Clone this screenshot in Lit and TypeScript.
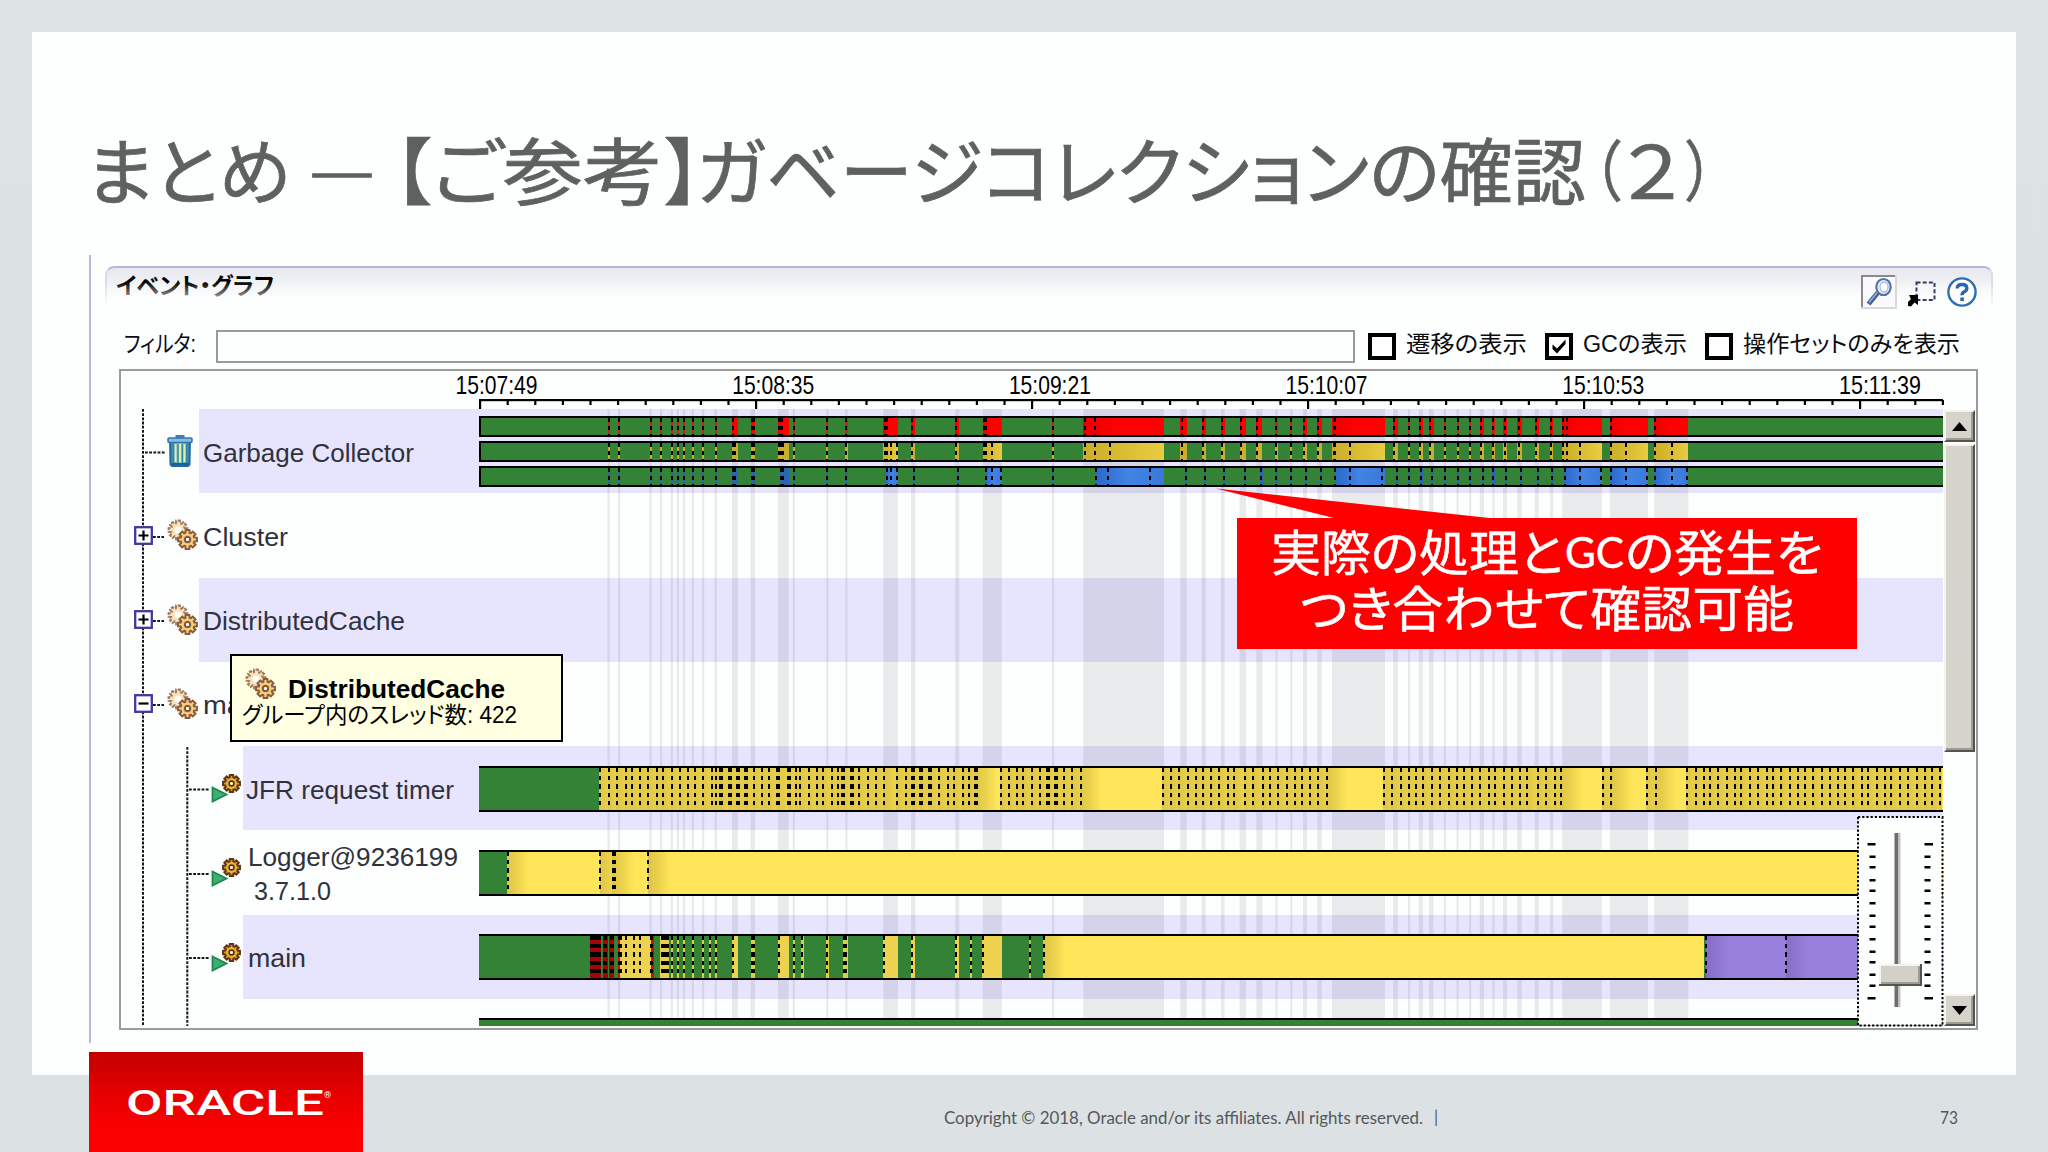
import { LitElement, html, svg, css, nothing } from "lit";
import { customElement, property } from "lit/decorators.js";

/** Text stretched or squeezed horizontally to a given advance width. */
@customElement("fit-text")
class FitText extends LitElement {
  @property({ type: Number }) w = 100;
  static styles = css`
    :host { display: inline-block; white-space: nowrap; flex: none; }
    span { display: inline-block; transform-origin: 0 50%; white-space: pre; }
  `;
  render() {
    return html`<span><slot></slot></span>`;
  }
  firstUpdated() {
    const span = this.renderRoot.querySelector("span") as HTMLElement;
    const natural = span.getBoundingClientRect().width;
    this.style.width = this.w + "px";
    if (natural > 0) span.style.transform = `scaleX(${this.w / natural})`;
  }
}

const GREEN = "#348235";
const YELLOW = "#fee559";
const PURPLE = "#9980dc";
const DASH = "4.2 4.2";

/** A garbage collection: extent, marks on the first two lanes, start and marks of the third. */
interface Pause { a: number; b: number; red: number[][]; yel: number[][]; blueFrom: number; blue: number[][]; }

const m = (x: number, w = 2) => [x, w];
const tiny = (x: number): Pause => ({ a: x - 1, b: x + 1.2, red: [m(x)], yel: [m(x)], blueFrom: x - 1, blue: [m(x)] });
const small = (a: number, b: number, d: number, e: number): Pause =>
  ({ a, b, red: [m(d)], yel: [m(d)], blueFrom: e - 1, blue: [m(e)] });

const PAUSES: Pause[] = [
  ...[608.5, 619, 650.5, 661, 671.7, 677.8, 684, 692.7, 703, 715.7].map(tiny),
  { a: 732, b: 738, red: [m(733)], yel: [m(734, 4)], blueFrom: 732, blue: [m(734, 4)] },
  { a: 750.5, b: 755, red: [m(752.8, 4)], yel: [m(752.8, 4)], blueFrom: 750.5, blue: [m(752.8, 4)] },
  { a: 778, b: 788.7, red: [m(780.3, 4.4)], yel: [m(781, 6)], blueFrom: 780, blue: [m(782.3, 4)] },
  tiny(793.8), tiny(827.2), tiny(846.3),
  { a: 883.3, b: 898, red: [m(886, 4)], yel: [m(886, 4), m(891), m(897)], blueFrom: 885.5, blue: [m(886.5), m(891), m(897)] },
  small(911, 915.4, 912, 914), small(955.3, 959.2, 956.3, 958.2),
  { a: 982.7, b: 1001.8, red: [m(984.8, 3.6)], yel: [m(984.8, 3.6), m(992)], blueFrom: 985.3, blue: [m(986), m(992), m(1000.6)] },
  tiny(1053),
  { a: 1083.3, b: 1164, red: [m(1084.7), m(1095.4)], yel: [m(1084.7), m(1095.4), m(1110)], blueFrom: 1095, blue: [m(1096), m(1108), m(1150)] },
  small(1180.3, 1186.7, 1181.7, 1185.7), small(1201.6, 1205.8, 1202.7, 1204.7), small(1221, 1224.6, 1221.8, 1223.6),
  small(1239.6, 1246, 1240.6, 1244.7), small(1256.3, 1262.4, 1257.4, 1261.4),
  tiny(1276.4), tiny(1291.2),
  small(1303, 1306.9, 1304, 1306), small(1317.3, 1321.8, 1318.4, 1320.7),
  { a: 1332, b: 1385, red: [m(1334.4, 3.6)], yel: [m(1334.4, 3.6), m(1350.2)], blueFrom: 1334.6, blue: [m(1335.2), m(1350.2), m(1382)] },
  small(1393.3, 1397.8, 1394.4, 1396.7), tiny(1409), small(1418.8, 1422.8, 1419.8, 1421.4),
  small(1429, 1433.5, 1430, 1432), tiny(1444.8), tiny(1457.5), tiny(1470),
  small(1479.8, 1484, 1480.8, 1482.8), tiny(1493.4), small(1503, 1507, 1504.6, 1505.6),
  small(1517.2, 1521.8, 1518.6, 1520.6), small(1534.6, 1538.8, 1536, 1537.5), small(1550, 1553.2, 1550.8, 1552.4),
  { a: 1562.2, b: 1601.8, red: [m(1562.8), m(1567)], yel: [m(1562.8), m(1566.6), m(1579.7)], blueFrom: 1564.3, blue: [m(1565), m(1579.7), m(1601)] },
  { a: 1610, b: 1648, red: [m(1611)], yel: [m(1611), m(1626)], blueFrom: 1610, blue: [m(1611), m(1626), m(1647)] },
  { a: 1654.3, b: 1688.3, red: [m(1655.4)], yel: [m(1655.4), m(1672.4)], blueFrom: 1654.3, blue: [m(1655.4), m(1672.4), m(1687)] },
];

const at = (base: number, scale: number, xs: number[]) => xs.map((x) => base + x / scale);

const TIMER_THIN = [
  ...at(460, 3, [420, 446, 471, 497, 515, 540, 565, 591, 610, 635, 660, 685, 704, 729, 755, 768, 882, 907, 926, 1008, 1021, 1046, 1071, 1090, 1116, 1135, 1198, 1223, 1248, 1273, 1312, 1337]),
  ...at(900, 3, [117, 143, 162, 188, 207, 302, 326, 352, 370, 396, 421, 491, 516, 542, 788, 813, 838, 863, 889, 908, 933, 958, 984, 1003, 1034, 1060, 1090, 1110, 1135, 1160, 1186, 1205, 1230, 1255, 1280]),
  ...at(1380, 2.529, [10, 30, 52, 73, 90, 110, 132, 153, 174, 195, 212, 233, 254, 276, 291, 313, 334, 355, 371, 399, 420, 442, 458, 564, 585, 676, 697, 777, 798, 819, 835, 856, 878, 899, 914, 936, 957, 979, 994, 1015, 1037, 1058, 1074, 1096, 1117, 1138, 1159, 1175, 1197, 1218, 1234, 1256, 1278, 1293, 1315, 1336, 1358, 1379, 1395, 1415]),
];
const TIMER_THICK = [...at(460, 3, [783, 809, 834, 859, 954, 986, 1150, 1176]), ...at(900, 3, [39, 64, 90, 228, 443, 468])];
const TIMER_MARKS = [...TIMER_THIN.map((x) => m(x)), ...TIMER_THICK.map((x) => m(x, 4))].sort((p, q) => p[0] - q[0]);

/** Blocks of the main thread: start, end, fill. */
const MAIN_BLOCKS: [number, number, string][] = [
  [590.3, 601.3, "#a80404"], [603, 607.6, "#a80404"], [609, 614.3, "#a80404"], [617.6, 621, "#d01010"],
  [620, 652, "#ecd24e"], [650.6, 654, "#c01010"], [660, 669, "#e8d04c"],
  ...[671.7, 677.7, 684, 692.7, 703, 709.7, 715.7].map((x) => [x - 1, x + 1.2, "#d8d040"] as [number, number, string]),
  [732, 738.3, "#ecd24e"], [750.5, 755, "#d8d040"], [778, 788.7, "#ecd24e"],
  [793, 795.2, "#d8d040"], [801.3, 803.5, "#d8d040"], [826.3, 828.5, "#d8d040"], [843.3, 847.7, "#d8d040"],
  [883.3, 898, "#ecd24e"], [910.7, 915.2, "#ecd24e"], [955, 959.3, "#ecd24e"], [969.7, 971.9, "#d8d040"],
  [982.4, 1001.8, "#ecd24e"], [1028.8, 1031, "#a8c840"], [1043.4, 1704, YELLOW], [1706, 1943, PURPLE],
];
const MAIN_MARKS = [
  m(595.8, 11), m(605.3, 4), m(611.7, 4.4), m(620, 3.6), m(625.7), m(634), m(640.3), m(651.6, 3.6), m(664.6, 8),
  m(671.7), m(677.7), m(684), m(692.7), m(703), m(709.7), m(715.7), m(733), m(752.8, 4), m(779),
  m(794), m(802.4), m(827.3), m(845.4, 4), m(884.3), m(911.7), m(956), m(970.7), m(983.4), m(1029.8), m(1044.4),
  m(1705.8), m(1785.7),
];

const marks = (list: number[][], y1: number, y2: number) =>
  list.map(([x, w]) => svg`<line x1=${x} x2=${x} y1=${y1} y2=${y2} stroke="#000" stroke-width=${w} stroke-dasharray=${DASH} />`);

const lane = (y: number, content: unknown) => svg`
  <rect x="479" y=${y} width="1466" height="21" fill=${GREEN} />
  ${content}
  <rect x="480" y=${y + 1} width="1466" height="19" fill="none" stroke="#000" stroke-width="2" />`;

const frame = (y: number) => svg`<rect x="479" y=${y} width="1466" height="2.2" /><rect x="479" y=${y + 44.3} width="1466" height="2.2" />`;

const gearPath = (() => {
  const pts: string[] = [];
  for (let i = 0; i < 8; i++) {
    for (const [r, d] of [[7, -0.3], [9.6, -0.2], [9.6, 0.2], [7, 0.3]]) {
      const t = (i * Math.PI) / 4 + d;
      pts.push(`${(r * Math.cos(t)).toFixed(2)},${(r * Math.sin(t)).toFixed(2)}`);
    }
  }
  return "M" + pts.join("L") + "Z";
})();

const gears = html`<svg width="32" height="32" viewBox="0 0 32 32">
  <g transform="translate(11 11)"><path d=${gearPath} fill="#f6e2bd" stroke="#a27a5c" stroke-width="2" stroke-dasharray="4 1.2" /><circle r="3.6" fill="#fffdf6" /></g>
  <g transform="translate(20.5 20.5)"><path d=${gearPath} fill="#f8d584" stroke="#8d5a40" stroke-width="2" /><circle r="4.8" fill="#f1c161" /><circle r="2.6" fill="#fff" stroke="#75503d" stroke-width="1.8" /></g>
</svg>`;

const thread = html`<svg width="32" height="32" viewBox="0 0 32 32">
  <path d="M1.5 15.5 15.5 22.5 1.5 29.5Z" fill="#3fae72" stroke="#1d8a4c" stroke-width="1.8" />
  <g transform="translate(20.5 11.5) scale(.9)"><path d=${gearPath} fill="#d8951f" stroke="#5d3618" stroke-width="2.2" /><circle r="6" fill="#f0b432" /><circle r="2.7" fill="#fff3dd" stroke="#55300f" stroke-width="1.8" /></g>
</svg>`;

const trash = html`<svg width="26" height="32" viewBox="0 0 26 32">
  <defs><linearGradient id="can" x1="0" x2="1" y1="0" y2="0"><stop offset="0" stop-color="#2c79ad" /><stop offset=".5" stop-color="#a8d8b8" /><stop offset="1" stop-color="#2c78ae" /></linearGradient></defs>
  <path d="M3 7H23L22.6 29Q22.4 31 20.5 31H5.5Q3.6 31 3.4 29Z" fill="url(#can)" stroke="#1f68a0" stroke-width="1.8" />
  <path d="M8.5 9V27M13 9V27M17.5 9V27" stroke="#e0efac" stroke-width="2" />
  <path d="M6.5 9V28M11 9V28M15.3 9V28M19.7 9V28" stroke="#2f86a6" stroke-width="1.3" />
  <path d="M4 28H22V30H5Z" fill="#1c5f9c" />
  <rect x="1" y="3" width="24" height="4.5" rx="1" fill="#86bcdf" stroke="#2f74ae" stroke-width="1.5" />
  <rect x="8.5" y="0" width="9" height="3" fill="#3f7fb5" />
</svg>`;

interface Row { level: 1 | 2; icon: unknown; box?: "+" | "-"; label: [string, number][]; inset?: boolean; }
const ROWS: Row[] = [
  { level: 1, icon: trash, label: [["Garbage Collector", 211]] },
  { level: 1, icon: gears, box: "+", label: [["Cluster", 85]] },
  { level: 1, icon: gears, box: "+", label: [["DistributedCache", 202]] },
  { level: 1, icon: gears, box: "-", label: [["main", 62]] },
  { level: 2, icon: thread, label: [["JFR request timer", 208]] },
  { level: 2, icon: thread, inset: true, label: [["Logger@9236199", 210], ["3.7.1.0", 77]] },
  { level: 2, icon: thread, inset: true, label: [["main", 58]] },
];

const TIMES = ["15:07:49", "15:08:35", "15:09:21", "15:10:07", "15:10:53", "15:11:39"];
const SLIDER_TICKS = [844, 856.5, 867, 880, 890.5, 903, 915.5, 926.5, 939, 951.5, 962, 974.5, 985.5, 998];

@customElement("app-root")
class AppRoot extends LitElement {
  static styles = css`
    :host { display: block; font-family: "Liberation Sans", "Noto Sans CJK JP", sans-serif; }
    * { box-sizing: border-box; }
    svg { display: block; flex: none; }
    .page { width: 2048px; height: 1152px; overflow: hidden; display: flex; flex-direction: column;
      background: linear-gradient(#dde3e2, #dce1e4); }
    .slide { margin: 32px 32px 0; height: 1043px; flex: none; background: #fdfefe; padding-left: 57px; }
    .title { margin: 0; height: 223px; padding-top: 47px; display: flex; align-items: center; color: #5f6160;
      font: 400 73px/90px "Noto Sans CJK JP", sans-serif; font-feature-settings: "palt"; -webkit-text-stroke: 0.7px #5f6160; }
    .first { margin-left: -3px; }
    .dash { margin-left: 17px; padding-top: 8px; -webkit-text-stroke-width: 1.6px; }
    .open { margin-left: 17px; }
    .mid { margin-left: 1px; }
    .close { margin-left: 2px; }
    .rest { margin-left: -5px; }
    .paren { margin-left: 6px; font-size: 66px; }
    .num { margin-left: 1px; }
    .parenEnd { margin-left: 4px; font-size: 66px; }
    .panel { height: 788px; border-left: 2px solid #b9b9d8; padding: 11px 0 0 14px; }
    .head { width: 1888px; height: 43px; display: flex; align-items: flex-start; padding: 0 14px 0 9px; position: relative;
      border-top: 2px solid #b7b7d6; border-radius: 9px 9px 0 0; background: linear-gradient(#e7e8ee, #fdfefe 34px);
      border-left: 2px solid #dcdce8; border-right: 2px solid #dcdce8; }
    .head::after { content: ""; position: absolute; inset: 14px -2px 0; pointer-events: none;
      background: linear-gradient(rgba(253, 254, 254, 0), #fdfefe 26px); }
    .headTitle { font: 700 23px/33px "Noto Sans CJK JP", sans-serif; font-feature-settings: "palt"; color: #000; }
    .tools { margin-left: auto; display: flex; padding-top: 7px; position: relative; z-index: 1; }
    .toolPick { margin: 6px 10px 0 10px; }
    .toolHelp { margin-top: 2px; }
    .filter { margin: 21px 0 0 19px; height: 33px; display: flex; align-items: center; color: #0b0b10;
      font: 400 23px/30px "Liberation Sans", "Noto Sans CJK JP", sans-serif; font-feature-settings: "palt"; }
    .filter fit-text { position: relative; top: -3px; }
    .field { width: 1139px; height: 33px; margin: 0 13px 0 20px; border: 2px solid #989a9c; background: #fdfefe; flex: none; }
    .check { width: 28px; height: 27px; border: 4px solid #000; background: #fff; margin-right: 10px; flex: none; }
    .gapA { margin-right: 18px; }
    .chart { margin: 6px 0 0 14px; width: 1859px; height: 661px; border: 2px solid #9a9b9b; position: relative; background: #fdfefe; }
    .body { height: 617px; display: flex; }
    .rows { width: 1822px; height: 617px; overflow: hidden; flex: none; position: relative; }
    .row { height: 84.25px; display: flex; align-items: center; padding-left: 13px; }
    .row.deep { padding-left: 90px; }
    .box { width: 19px; height: 19px; position: relative; z-index: 1; flex: none; margin-right: 14px; }
    .icon { width: 32px; flex: none; position: relative; z-index: 1; }
    .label { flex: 1; align-self: stretch; padding: 3px 0 0 4px; display: flex; flex-direction: column; justify-content: center;
      align-items: flex-start; font: 400 25px/34px "Liberation Sans", sans-serif; color: #30313d; }
    .deep .label { padding-left: 3px; }
    .deep .inset { padding-left: 5px; }
    .tint { background: #e6e5fd; }
    .sub { margin-left: 6px; }
    .overlay { position: absolute; left: 0; top: 0; }
    .plot { position: absolute; left: 358px; top: 0; }
    .scroll { width: 33px; display: flex; flex-direction: column; align-items: center; padding-top: 1px; background: #fdfefe; }
    .btn { width: 31px; height: 32px; flex: none; background: #d5d3ca; border: 2px solid; border-color: #f4f3ee #55554f #55554f #f4f3ee;
      box-shadow: inset -2px -2px 0 #9d9c95; display: flex; align-items: center; justify-content: center; }
    .thumb { height: 308px; margin-top: 2px; }
    .down { margin-top: auto; }
    .tip { position: absolute; left: 109px; top: 283px; width: 333px; height: 88px; z-index: 2; background: #ffffe1;
      border: 2px solid #000; padding: 12px 0 0 10px; color: #000; }
    .tipHead { display: flex; height: 32px; align-items: center; padding-left: 3px; font: 700 25px/32px "Liberation Sans", sans-serif; }
    .tipHead fit-text { margin: 10px 0 0 11px; }
    .tipBody { font: 400 23px/30px "Liberation Sans", "Noto Sans CJK JP", sans-serif; font-feature-settings: "palt"; }
    .slider { position: absolute; left: 1736px; top: 445px; z-index: 2; }
    .tail { position: absolute; left: 1090px; top: 112px; z-index: 2; }
    .callout { position: absolute; left: 1116px; top: 147px; width: 620px; height: 131px; z-index: 3; background: #fe0000; color: #fff;
      font: 400 49px/56px "Noto Sans CJK JP", sans-serif; font-feature-settings: "palt"; padding: 4px 0 0 34px;
      -webkit-text-stroke: 0.5px #fff; }
    .line { display: flex; align-items: center; height: 56px; }
    .gc { font-family: Lato, sans-serif; font-size: 43px; padding-top: 4px; margin: 0 1px 0 2px; }
    .second { padding-left: 29px; }
    .footer { height: 77px; display: flex; align-items: flex-start; padding-left: 89px; flex: none; color: #55585a;
      font: 400 16.5px/20px Lato, sans-serif; }
    .logo { width: 274px; height: 100px; margin-top: -23px; flex: none; display: flex; align-items: flex-start; padding: 28.5px 0 0 37px;
      background: linear-gradient(#c40000, #e80000 45%, #fb0000 75%); color: #fff; font: 500 35.5px/44px Roboto, sans-serif; }
    .reg { font: 400 9px/12px Roboto, sans-serif; margin-top: 8px; }
    .copy { margin: 33px 0 0 581px; }
    .bar { margin: 32px 0 0 11px; }
    .num73 { margin: 33px 0 0 502px; }
  `;

  private axis() {
    const ticks = Array.from({ length: 54 }, (_, i) => 480 + i * 27.6);
    return svg`<svg width="1855" height="38" viewBox="121 371 1855 38" font-size="25">
      <rect x="479" y="399" width="1464" height="2.2" />
      ${ticks.map((x, i) => svg`<rect x=${x - 1} y="400" width="2.2" height=${i % 10 === 0 ? 9 : 5} />`)}
      ${TIMES.map((t, i) => svg`<text x=${455.5 + i * 276.7} y="394" textLength="82" lengthAdjust="spacingAndGlyphs">${t}</text>`)}
    </svg>`;
  }

  private guides() {
    const h = (x1: number, x2: number, y: number) => svg`<line x1=${x1} x2=${x2} y1=${y} y2=${y} />`;
    return svg`<svg class="overlay" width="122" height="617" viewBox="121 409 122 617" stroke="#15151c" stroke-width="2" stroke-dasharray="2.8 1.4">
      <line x1="143" x2="143" y1="409" y2="1026" /><line x1="187.3" x2="187.3" y1="747" y2="1026" />
      ${h(145, 165, 452.5)}${h(153, 164, 537)}${h(153, 164, 621)}${h(153, 164, 705)}
      ${h(189, 210, 789.5)}${h(189, 210, 874)}${h(189, 210, 958)}
    </svg>`;
  }

  private plot() {
    const gaps = TIMER_MARKS.map(([x], i) => ({ x, w: Math.min(22, (TIMER_MARKS[i + 1]?.[0] ?? 1943) - x) }));
    return svg`<svg class="plot" width="1464" height="617" viewBox="479 409 1464 617" shape-rendering="crispEdges">
      <defs>
        <linearGradient id="gy" gradientUnits="userSpaceOnUse" x1="0" x2="22" y1="0" y2="0"><stop offset="0" stop-color="#dec445" /><stop offset=".4" stop-color="#e8d04c" /><stop offset="1" stop-color=${YELLOW} /></linearGradient>
        <linearGradient id="gp" gradientUnits="userSpaceOnUse" x1="0" x2="22" y1="0" y2="0"><stop offset="0" stop-color="#846bc4" /><stop offset="1" stop-color=${PURPLE} /></linearGradient>
        <linearGradient id="ly"><stop offset="0" stop-color="#ccac28" /><stop offset="1" stop-color="#e8cc42" /></linearGradient>
        <linearGradient id="lb"><stop offset="0" stop-color="#2c68c8" /><stop offset=".5" stop-color="#4084e4" /><stop offset="1" stop-color="#3a78d8" /></linearGradient>
        <linearGradient id="lr"><stop offset="0" stop-color="#e80000" /><stop offset=".4" stop-color="#fe0000" /></linearGradient>
      </defs>
      <g shape-rendering="auto">${PAUSES.map((p) => svg`<rect x=${p.a} y="409" width=${p.b - p.a} height="617" fill="#000008" fill-opacity=".08" />`)}</g>
      ${lane(416, PAUSES.map((p) => svg`<rect x=${p.a} y="416" width=${p.b - p.a} height="21" fill=${p.b - p.a < 3 ? "#d02010" : "url(#lr)"} />${marks(p.red, 417.5, 435)}`))}
      ${lane(441, PAUSES.map((p) => svg`<rect x=${p.a} y="441" width=${p.b - p.a} height="21" fill=${p.b - p.a < 12 ? "#ccae2e" : "url(#ly)"} />${marks(p.yel, 442.5, 460)}`))}
      ${lane(466, PAUSES.map((p) => svg`<rect x=${p.blueFrom} y="466" width=${p.red.length === 1 && p.yel.length === 1 && p.b - p.a < 7 && p.blueFrom > p.a ? 2.2 : p.b - p.blueFrom} height="21" fill=${p.b - p.a < 12 ? "#2c64b4" : "url(#lb)"} />${marks(p.blue, 467.5, 485)}`))}

      <rect x="479" y="765.5" width="1466" height="46.5" fill=${GREEN} />
      <rect x="599" y="765.5" width="1346" height="46.5" fill=${YELLOW} />
      ${gaps.map((g) => svg`<rect transform=${`translate(${g.x - 1} 765.5)`} width=${g.w} height="46.5" fill="url(#gy)" />`)}
      ${marks(TIMER_MARKS, 767.5, 806)}
      ${frame(765.5)}

      <rect x="479" y="849.5" width="1466" height="46.5" fill=${GREEN} />
      <rect x="506.5" y="849.5" width="1440" height="46.5" fill=${YELLOW} />
      ${[[506.5, 22], [599.5, 12], [612, 22], [648, 22]].map(([x, w]) => svg`<rect transform=${`translate(${x} 849.5)`} width=${w} height="46.5" fill="url(#gy)" />`)}
      ${marks([m(507.5), m(600), m(613.8, 4), m(648.4)], 851.5, 890)}
      ${frame(849.5)}

      <rect x="479" y="933.5" width="1466" height="46.5" fill=${GREEN} />
      ${MAIN_BLOCKS.map(([a, b, c]) => svg`<rect x=${a} y="933.5" width=${b - a} height="46.5" fill=${c} />`)}
      <rect transform="translate(1043.4 933.5)" width="22" height="46.5" fill="url(#gy)" />
      <rect transform="translate(1706 933.5)" width="22" height="46.5" fill="url(#gp)" />
      <rect transform="translate(1785.5 933.5)" width="22" height="46.5" fill="url(#gp)" />
      ${marks(MAIN_MARKS, 935.5, 974)}
      ${frame(933.5)}

      <rect x="479" y="1017.7" width="1466" height="10" fill=${GREEN} />
      <rect x="479" y="1017.7" width="1466" height="2.2" />
    </svg>`;
  }

  private slider() {
    return svg`<svg class="slider" width="87" height="211" viewBox="1857 816 87 211">
      <rect x="1858" y="817" width="84.5" height="208.5" fill="#fdfefe" stroke="#000" stroke-width="2" stroke-dasharray="2.2 2" />
      ${SLIDER_TICKS.map((y, i) => {
        const big = i === 0 || i === SLIDER_TICKS.length - 1;
        return svg`<rect x=${big ? 1867.5 : 1869.5} y=${y - 1} width=${big ? 8 : 6} height="2.5" /><rect x="1924.5" y=${y - 1} width=${big ? 8.5 : 6} height="2.5" />`;
      })}
      <rect x="1894.5" y="833" width="4" height="174" fill="#6c6c6c" /><rect x="1898.5" y="833" width="2" height="174" fill="#c4c4c0" />
      <rect x="1879" y="964" width="43" height="22" fill="#55554f" /><rect x="1879" y="964" width="41" height="20" fill="#f4f3ee" />
      <rect x="1881" y="966" width="39" height="18" fill="#9d9c95" /><rect x="1881" y="966" width="37" height="16" fill="#d2d0c8" />
    </svg>`;
  }

  private row(r: Row, i: number) {
    return html`<div class="row ${r.level === 2 ? "deep" : ""}">
      ${r.level === 1
        ? html`<div class="box">${r.box
            ? html`<svg width="19" height="19" viewBox="0 0 19 19"><rect x="1.2" y="1.2" width="16.6" height="16.6" fill="#fff" stroke="#40389c" stroke-width="2.3" />
                <path d=${r.box === "+" ? "M4.5 9.5H14.5M9.5 4.5V14.5" : "M4.5 9.5H14.5"} stroke="#000" stroke-width="2.2" /></svg>`
            : nothing}</div>`
        : nothing}
      <div class="icon">${r.icon}</div>
      <div class="label ${i % 2 === 0 ? "tint" : ""} ${r.inset ? "inset" : ""}">${r.label.map(([t, w], k) => html`<fit-text class=${k ? "sub" : ""} .w=${w}>${t}</fit-text>`)}</div>
    </div>`;
  }

  render() {
    return html`<div class="page">
      <main class="slide">
        <h1 class="title">
          <fit-text class="first" .w=${205}>まとめ</fit-text><fit-text class="dash" .w=${68}>―</fit-text>
          <fit-text class="open" .w=${38}>【</fit-text><fit-text class="mid" .w=${231}>ご参考</fit-text><fit-text class="close" .w=${36}>】</fit-text>
          <fit-text class="rest" .w=${890}>ガベージコレクションの確認</fit-text>
          <fit-text class="paren" .w=${29}>（</fit-text><fit-text class="num" .w=${60}>２</fit-text><fit-text class="parenEnd" .w=${28}>）</fit-text>
        </h1>
        <section class="panel">
          <header class="head">
            <fit-text class="headTitle" .w=${158}>イベント・グラフ</fit-text>
            <div class="tools">
              <svg width="36" height="34" viewBox="0 0 36 34">
                <rect width="36" height="34" fill="#d8d8da" /><rect width="34" height="32" fill="#8a8a8c" /><rect x="2" y="2" width="32" height="30" fill="#fafafc" />
                <path d="M7.5 29 17 17.5" stroke="#46618f" stroke-width="5" /><path d="M8 27.5 16.5 17" stroke="#9aaccb" stroke-width="1.6" />
                <ellipse cx="22.5" cy="12" rx="7.2" ry="8" fill="#e8effa" stroke="#5673a8" stroke-width="2.2" /><ellipse cx="23" cy="12" rx="4" ry="5" fill="#fff" stroke="#a9bcdc" stroke-width="1.3" />
              </svg>
              <svg class="toolPick" width="30" height="26" viewBox="0 0 30 26">
                <rect x="9.5" y="1.5" width="18" height="17.5" fill="none" stroke="#3c3768" stroke-width="2" stroke-dasharray="4 2.2" />
                <path d="M1 25 1 21 4 18 2 14H11V24L7.5 21.5 4 25.5Z" fill="#000" />
              </svg>
              <svg class="toolHelp" width="30" height="30" viewBox="0 0 30 30">
                <circle cx="15" cy="15" r="13.6" fill="#fff" stroke="#2f6fae" stroke-width="2.4" />
                <path d="M10.2 11.5Q10.2 7.5 15 7.5T19.8 11.2Q19.8 13.5 17.3 14.8T15.2 18.3" fill="none" stroke="#2a68ab" stroke-width="3.4" /><rect x="13.3" y="20.5" width="3.6" height="3.6" fill="#2a68ab" />
              </svg>
            </div>
          </header>
          <div class="filter">
            <fit-text .w=${72}>フィルタ:</fit-text>
            <div class="field"></div>
            <div class="check"></div><fit-text class="gapA" .w=${121}>遷移の表示</fit-text>
            <div class="check"><svg width="20" height="19" viewBox="0 0 20 19"><path d="M3.5 7.5V12L8 16.5 16.5 7V2.5L8 11.5Z" fill="#000" /></svg></div><fit-text class="gapA" .w=${104}>GCの表示</fit-text>
            <div class="check"></div><fit-text .w=${217}>操作セットのみを表示</fit-text>
          </div>
          <div class="chart">
            ${this.axis()}
            <div class="body">
              <div class="rows">
                ${ROWS.map((r, i) => this.row(r, i))}
                ${this.guides()} ${this.plot()}
              </div>
              <div class="scroll">
                <div class="btn"><svg width="15" height="9" viewBox="0 0 15 9"><path d="M7.5 0 15 9H0Z" /></svg></div>
                <div class="btn thumb"></div>
                <div class="btn down"><svg width="15" height="9" viewBox="0 0 15 9"><path d="M7.5 9 15 0H0Z" /></svg></div>
              </div>
            </div>
            ${this.slider()}
            <div class="tip">
              <div class="tipHead">${gears}<fit-text .w=${217}>DistributedCache</fit-text></div>
              <fit-text class="tipBody" .w=${275}>グループ内のスレッド数: 422</fit-text>
            </div>
            <svg class="tail" width="310" height="36" viewBox="1211 482 310 36"><path d="M1216 487.5 1508 519H1342Z" fill="#fe0000" /></svg>
            <div class="callout">
              <div class="line"><fit-text .w=${292}>実際の処理と</fit-text><fit-text class="gc" .w=${59}>GC</fit-text><fit-text .w=${198}>の発生を</fit-text></div>
              <div class="line second"><fit-text .w=${494}>つき合わせて確認可能</fit-text></div>
            </div>
          </div>
        </section>
      </main>
      <footer class="footer">
        <div class="logo"><fit-text .w=${198}>ORACLE</fit-text><span class="reg">®</span></div>
        <fit-text class="copy" .w=${479}>Copyright © 2018, Oracle and/or its affiliates. All rights reserved.</fit-text>
        <span class="bar">|</span>
        <fit-text class="num73" .w=${18}>73</fit-text>
      </footer>
    </div>`;
  }
}
